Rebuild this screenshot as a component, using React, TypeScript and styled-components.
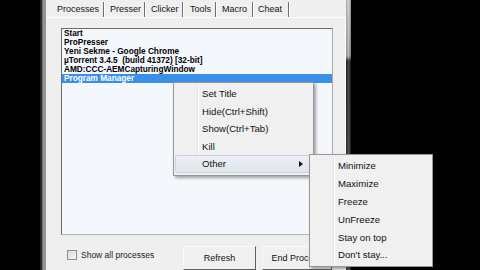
import { createGlobalStyle, styled } from "styled-components";

const GlobalStyle = createGlobalStyle`
  html, body {
    margin: 0;
    padding: 0;
    background: #000;
  }
  body {
    width: 480px;
    height: 270px;
    overflow: hidden;
    font-family: "Liberation Sans", Arial, sans-serif;
  }
`;

const Screen = styled.div`
  position: relative;
  display: flex;
  width: 480px;
  height: 270px;
  background: #000;
  overflow: hidden;
`;

const Backdrop = styled.div`
  width: 40px;
  flex-shrink: 0;
`;

const FrameLeft = styled.div`
  width: 6px;
  flex-shrink: 0;
  background: linear-gradient(to right, #262626 0 2px, #767676 2px 3px, #939393 3px);
`;

const FrameRight = styled.div`
  width: 5px;
  flex-shrink: 0;
  background:
    linear-gradient(to right, rgba(0, 0, 0, 0.15), rgba(255, 255, 255, 0.2) 50%, rgba(0, 0, 0, 0.25)),
    linear-gradient(to bottom, #c8c8c8 0, #a4a4a4 56px, #1c1c1c 61px, #383838 100%);
`;

const Panel = styled.div`
  width: 300px;
  flex-shrink: 0;
  display: flex;
  flex-direction: column;
  background: #efefef;
`;

const TabStrip = styled.div`
  height: 20px;
  display: flex;
  align-items: flex-end;
  padding-left: 6px;
`;

const Tab = styled.div<{ $w: number; $pad: number }>`
  box-sizing: border-box;
  width: ${(p) => p.$w}px;
  height: 15px;
  padding-left: ${(p) => p.$pad}px;
  border-right: 1px solid #6e6e6e;
  box-shadow: 1px 0 0 #fff;
  font-size: 9px;
  line-height: 15px;
  color: #111;
  white-space: nowrap;
`;

const TabPage = styled.div`
  flex: 1;
  display: flex;
  flex-direction: column;
  padding: 10px 0 0 15px;
  border-top: 1px solid #fff;
  border-right: 1px solid #fff;
`;

const ListBox = styled.div`
  box-sizing: border-box;
  width: 272px;
  height: 207px;
  border: 1px solid;
  border-color: #6b6b6b #a9a9a9 #b4b4b4 #6b6b6b;
  background: #f4f7fc;
`;

const Row = styled.div<{ $selected?: boolean }>`
  height: 9px;
  line-height: 9px;
  padding-left: 2px;
  font-size: 8.25px;
  font-weight: bold;
  white-space: pre;
  color: ${(p) => (p.$selected ? "#fff" : "#000")};
  background: ${(p) => (p.$selected ? "#3a8fe9" : "transparent")};
`;

const Footer = styled.div`
  display: flex;
  align-items: flex-start;
  padding-left: 6px;
`;

const CheckLabel = styled.label`
  width: 116px;
  margin-top: 15px;
  display: flex;
  align-items: center;
  font-size: 8.5px;
  color: #222;
`;

const CheckBox = styled.span`
  box-sizing: border-box;
  width: 10px;
  height: 10px;
  margin-right: 4px;
  border: 1px solid #8e8f8f;
  background: linear-gradient(135deg, #d8d8d8, #fbfbfb);
`;

const Button = styled.div<{ $w: number }>`
  box-sizing: border-box;
  width: ${(p) => p.$w}px;
  height: 24px;
  margin-top: 11px;
  margin-right: 6px;
  border: 1px solid;
  border-color: #fafafa #5e5e5e #5e5e5e #fafafa;
  background: #f0f0f0;
  font-size: 9px;
  line-height: 22px;
  text-align: center;
  color: #111;
  white-space: nowrap;
`;

const Menu = styled.div<{ $x: number; $y: number; $w: number }>`
  position: absolute;
  left: ${(p) => p.$x}px;
  top: ${(p) => p.$y}px;
  box-sizing: border-box;
  width: ${(p) => p.$w}px;
  padding: 2px 0;
  border: 1px solid #979797;
  background: #f0f0f0;
  box-shadow: 2px 2px 3px rgba(0, 0, 0, 0.35);
  font-size: 9.6px;
  color: #111;

  &::before {
    content: "";
    position: absolute;
    left: 23px;
    top: 2px;
    bottom: 2px;
    width: 1px;
    background: #e2e3e3;
    box-shadow: 1px 0 0 #fff;
  }
`;

const MenuItem = styled.div<{ $h: number; $active?: boolean }>`
  position: relative;
  box-sizing: border-box;
  height: ${(p) => p.$h}px;
  margin: 0 1px;
  padding: 0 8px 0 26px;
  display: flex;
  align-items: center;
  justify-content: space-between;
  border: 1px solid ${(p) => (p.$active ? "#c9d3de" : "transparent")};
  border-radius: 2px;
  background: ${(p) => (p.$active ? "linear-gradient(#ebeff4, #dfe5ec)" : "transparent")};
  white-space: nowrap;
`;

const Arrow = styled.span`
  width: 0;
  height: 0;
  border-left: 4px solid #111;
  border-top: 3px solid transparent;
  border-bottom: 3px solid transparent;
`;

const tabs = [
  { label: "Processes", w: 52, pad: 5 },
  { label: "Presser", w: 41, pad: 6 },
  { label: "Clicker", w: 38, pad: 6 },
  { label: "Tools", w: 33, pad: 7 },
  { label: "Macro", w: 37, pad: 6 },
  { label: "Cheat", w: 36, pad: 5 },
];

const processes = [
  "Start",
  "ProPresser",
  "Yeni Sekme - Google Chrome",
  "µTorrent 3.4.5  (build 41372) [32-bit]",
  "AMD:CCC-AEMCapturingWindow",
  "Program Manager",
];

const mainItems = ["Set Title", "Hide(Ctrl+Shift)", "Show(Ctrl+Tab)", "Kill", "Other"];
const subItems = ["Minimize", "Maximize", "Freeze", "UnFreeze", "Stay on top", "Don't stay..."];

export default function App() {
  return (
    <Screen>
      <GlobalStyle />
      <Backdrop />
      <FrameLeft />
      <Panel>
        <TabStrip>
          {tabs.map((t) => (
            <Tab key={t.label} $w={t.w} $pad={t.pad}>
              {t.label}
            </Tab>
          ))}
        </TabStrip>
        <TabPage>
          <ListBox>
            {processes.map((p) => (
              <Row key={p} $selected={p === "Program Manager"}>
                {p}
              </Row>
            ))}
          </ListBox>
          <Footer>
            <CheckLabel>
              <CheckBox />
              Show all processes
            </CheckLabel>
            <Button $w={73}>Refresh</Button>
            <Button $w={70}>End Process</Button>
          </Footer>
        </TabPage>
      </Panel>
      <FrameRight />

      <Menu $x={173} $y={82} $w={141}>
        {mainItems.map((m) => (
          <MenuItem key={m} $h={17.5} $active={m === "Other"}>
            {m}
            {m === "Other" && <Arrow />}
          </MenuItem>
        ))}
      </Menu>

      <Menu $x={309} $y={154} $w={124}>
        {subItems.map((m) => (
          <MenuItem key={m} $h={17.8}>
            {m}
          </MenuItem>
        ))}
      </Menu>
    </Screen>
  );
}
